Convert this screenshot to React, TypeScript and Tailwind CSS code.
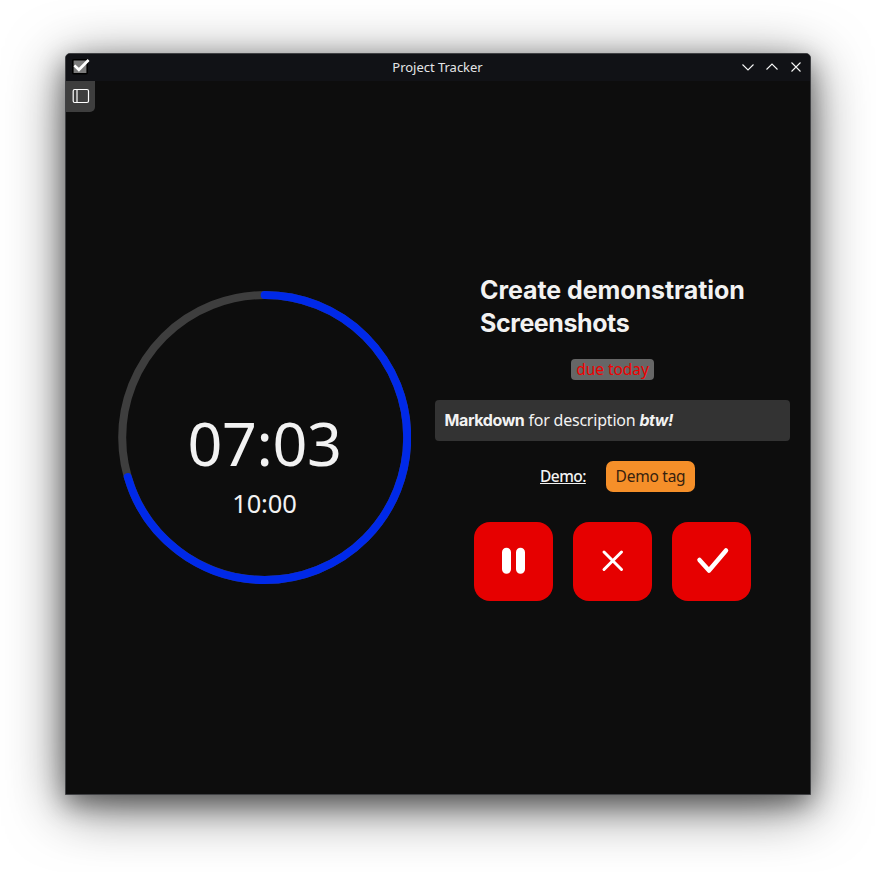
import type { ReactNode } from "react";

function AppIcon() {
  return (
    <svg width="20" height="20" viewBox="0 0 20 20">
      <rect x="0.8" y="2.8" width="14.4" height="14" rx="1" fill="#7b7b7b" stroke="#000" strokeWidth="1.6" />
      <path d="M2.4 8.4 L6.9 12.8 L16.6 3" fill="none" stroke="#fff" strokeWidth="2.7" />
    </svg>
  );
}

function TitleBar() {
  return (
    <header className="flex h-[27px] shrink-0 items-center justify-between bg-[#111216] pr-[6px] pb-px pl-[6px]">
      <div className="flex w-[63px] items-center">
        <AppIcon />
      </div>
      <span className="font-['Noto_Sans',sans-serif] text-[13px] leading-[18px] tracking-[-0.02px] text-[#e4e5e7]">
        Project Tracker
      </span>
      <svg width="64" height="16" viewBox="0 0 64 16" fill="none" stroke="#f5f5f5" strokeWidth="1.1">
        <path d="M2.5 5.5 L8 11 L13.5 5.5" />
        <path d="M26.5 10.5 L32 5 L37.5 10.5" />
        <path d="M51.5 3.5 L60.5 12.5 M60.5 3.5 L51.5 12.5" />
      </svg>
    </header>
  );
}

function Timer() {
  const radius = 142.5;
  const length = 2 * Math.PI * radius;
  return (
    <div className="grid h-[293px] w-[293px] shrink-0 place-items-center">
      <svg className="col-start-1 row-start-1" width="293" height="293" viewBox="0 0 293 293" fill="none" strokeWidth="8">
        <circle cx="146.7" cy="146.5" r={radius} stroke="#3e3e3e" />
        <circle
          cx="146.7"
          cy="146.5"
          r={radius}
          stroke="#0029e8"
          strokeLinecap="round"
          strokeDasharray={`${length * 0.705} ${length}`}
          transform="rotate(-90 146.7 146.5)"
        />
      </svg>
      <div className="col-start-1 row-start-1 flex flex-col items-center pt-[51px] font-['Noto_Sans',sans-serif] text-[#f2f2f2]">
        <div className="text-[61px] leading-[72px] tracking-[-0.4px]">07:03</div>
        <div className="pt-[8px] text-[25.5px] leading-[32px] tracking-[-0.1px]">10:00</div>
      </div>
    </div>
  );
}

function ActionButton({ children }: { children: ReactNode }) {
  return (
    <button className="flex h-[79px] w-[79px] items-center justify-center rounded-[16px] bg-[#e60000]">
      <svg width="79" height="79" viewBox="0 0 79 79" fill="none" stroke="#fff" strokeLinecap="round">
        {children}
      </svg>
    </button>
  );
}

function TaskDetails() {
  return (
    <section className="flex w-[355px] flex-col items-center font-['Noto_Sans',sans-serif] text-[#f2f2f2]">
      <h1 className="w-[265px] font-['Inter',sans-serif] text-[25px] leading-[33px] font-bold whitespace-nowrap">
        <span className="tracking-[-0.07px]">Create demonstration</span>
        <br />
        <span className="tracking-[-0.42px]">Screenshots</span>
      </h1>
      <div className="mt-[19px] flex h-[21px] w-[83px] items-center justify-center rounded-[4px] bg-[#666] pb-px text-[15.5px] leading-[20px] tracking-[-0.05px] whitespace-nowrap text-[#f00000]">
        due today
      </div>
      <div className="mt-[20px] h-[41px] w-full rounded-[4px] bg-[#333] px-[9.5px] text-[16px] leading-[41px] whitespace-nowrap">
        <strong className="font-['Inter',sans-serif] tracking-[-0.4px]">Markdown</strong>
        <span className="tracking-[-0.21px]"> for description </span>
        <strong className="font-['Inter',sans-serif] tracking-[-0.45px] italic">btw!</strong>
      </div>
      <div className="mt-[20px] flex h-[31px] items-center gap-[20px] pl-[10px]">
        <span className="w-[46px] pb-px text-[15.5px] font-medium tracking-[-0.55px] whitespace-nowrap underline">
          Demo:
        </span>
        <span className="flex h-[31px] w-[89px] items-center justify-center rounded-[7px] bg-[#f58f29] pb-px text-[15.5px] tracking-[-0.25px] whitespace-nowrap text-[#36210e]">
          Demo tag
        </span>
      </div>
      <div className="mt-[29.5px] flex gap-[19.8px]">
        <ActionButton>
          <path d="M32.5 30.2 V47.2 M46.5 30.2 V47.2" strokeWidth="9" />
        </ActionButton>
        <ActionButton>
          <path d="M31 30 L48.5 47.5 M48.5 30 L31 47.5" strokeWidth="3" />
        </ActionButton>
        <ActionButton>
          <path d="M27.5 38 L37 48.5 L54 28.5" strokeWidth="4.5" strokeLinejoin="round" />
        </ActionButton>
      </div>
    </section>
  );
}

export default function App() {
  return (
    <div className="h-[872px] w-[876px] overflow-hidden bg-white pt-[53px] pl-[65px]">
      <div className="flex h-[742px] w-[746px] flex-col overflow-hidden rounded-t-[5px] border border-[#404144] bg-[#0d0d0d] shadow-[0_12px_57px_rgba(0,0,0,0.58),0_9px_26px_rgba(0,0,0,0.4)]">
        <TitleBar />
        <div className="flex h-[31px] w-[29px] shrink-0 items-center justify-center rounded-br-[5px] bg-[#3e3e3e] pb-px">
          <svg width="18" height="16" viewBox="0 0 18 16" fill="none" stroke="#fff" strokeWidth="1.2">
            <rect x="1.2" y="1.5" width="15.3" height="13" rx="1.5" />
            <path d="M5 1.5 V14.5" />
          </svg>
        </div>
        <main className="flex flex-1 items-center gap-[24px] pb-[31px] pl-[52px]">
          <Timer />
          <TaskDetails />
        </main>
      </div>
    </div>
  );
}
